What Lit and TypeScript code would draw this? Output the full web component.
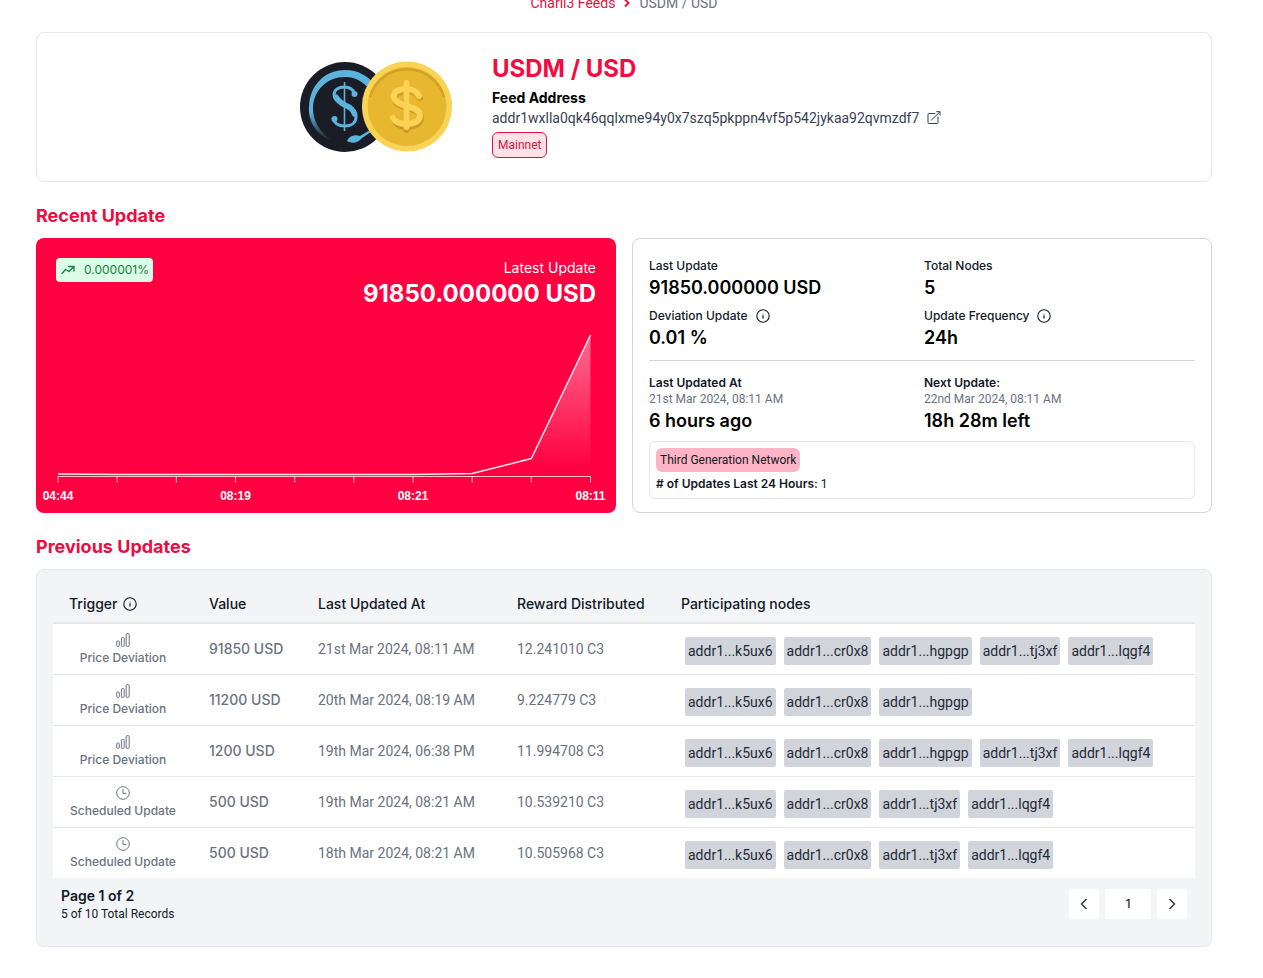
import { LitElement, html, css, svg } from "lit";
import { customElement, property, state } from "lit/decorators.js";

type Kind = "deviation" | "scheduled";

interface UpdateRow {
  kind: Kind;
  value: string;
  date: string;
  reward: string;
  nodes: string[];
}

const K = "addr1...k5ux6";
const C = "addr1...cr0x8";
const H = "addr1...hgpgp";
const T = "addr1...tj3xf";
const L = "addr1...lqgf4";

const ROWS: UpdateRow[] = [
  { kind: "deviation", value: "91850 USD", date: "21st Mar 2024, 08:11 AM", reward: "12.241010 C3", nodes: [K, C, H, T, L] },
  { kind: "deviation", value: "11200 USD", date: "20th Mar 2024, 08:19 AM", reward: "9.224779 C3", nodes: [K, C, H] },
  { kind: "deviation", value: "1200 USD", date: "19th Mar 2024, 06:38 PM", reward: "11.994708 C3", nodes: [K, C, H, T, L] },
  { kind: "scheduled", value: "500 USD", date: "19th Mar 2024, 08:21 AM", reward: "10.539210 C3", nodes: [K, C, T, L] },
  { kind: "scheduled", value: "500 USD", date: "18th Mar 2024, 08:21 AM", reward: "10.505968 C3", nodes: [K, C, T, L] },
];

const infoIcon = html`<svg width="14" height="14" viewBox="0 0 14 14" fill="none" stroke="currentColor" role="img" aria-label="Info">
  <circle cx="7" cy="7" r="6.2" stroke-width="1.1"></circle>
  <path d="M7 6.2v3.2" stroke-width="1.2"></path>
  <path d="M7 4.4v1" stroke-width="1.1" opacity="0.6"></path>
</svg>`;

const barsIcon = html`<svg width="14" height="14" viewBox="0 0 14 14" fill="none" stroke="currentColor" aria-hidden="true">
  <rect x="0.7" y="8" width="2.6" height="5.3" rx="0.8"></rect>
  <rect x="5.4" y="4.6" width="2.8" height="8.7" rx="0.8"></rect>
  <rect x="10.2" y="0.7" width="3" height="12.6" rx="0.8"></rect>
</svg>`;

const clockIcon = html`<svg width="14" height="14" viewBox="0 0 14 14" fill="none" stroke="currentColor" aria-hidden="true">
  <circle cx="7" cy="7" r="6.3"></circle>
  <path d="M7 3.4V7.4H10" stroke-linecap="round" stroke-linejoin="round"></path>
</svg>`;

@customElement("coin-pair")
class CoinPair extends LitElement {
  static styles = css`
    :host { display: block; flex: none; }
    .coins { display: block; }
  `;

  render() {
    return html`<svg class="coins" width="152" height="92" viewBox="0 0 152 92" role="img" aria-label="USDM and USD coins">
      <defs>
        <linearGradient id="ring" x1="0" y1="0" x2="0" y2="1">
          <stop offset="0.6" stop-color="#5cb3dd"></stop>
          <stop offset="1" stop-color="#5cb3dd" stop-opacity="0"></stop>
        </linearGradient>
      </defs>
      <circle cx="45" cy="46" r="45" fill="#1a1d26"></circle>
      <path fill="url(#ring)" d="M33 80C16 74 8 61 9 45C10 24 25 9 45 9C58 9 68 15 75 24L70 29C63 20 55 16 45 16C27 16 14 29 13 46C12.500 60 20 72 33 80Z"></path>
      <path fill="#5cb3dd" d="M47 80C49 75 55 73 60 75L70 69L71 71L62 77C58 82 52 83 47 80Z"></path>
      <g fill="none" stroke="#5cb3dd">
        <path stroke-width="1.600" d="M44.500 21V70"></path>
        <path stroke-width="3" d="M55 33C53 28 50 26 44.500 26C38 26 34 29 34 34C34 39 38 41.500 44.500 44C52 47 56 50 56 56C56 62 51 65 45 65C38 65 34 62 33 57"></path>
        <path stroke-width="5.500" stroke-linecap="round" d="M36 36C38 40 41 42 45 44C50 46 53 48 54.500 53"></path>
      </g>
      <circle cx="54.500" cy="33" r="3" fill="#5cb3dd"></circle>
      <circle cx="34.500" cy="58" r="3" fill="#5cb3dd"></circle>
      <circle cx="107" cy="45.500" r="45" fill="#fad254"></circle>
      <circle cx="107" cy="45.500" r="39.500" fill="#e8b730"></circle>
      <path fill="none" stroke="#d2a127" stroke-width="2.500" d="M70 36A38.500 38.500 0 0 1 144 36"></path>
      <g fill="none" stroke-width="6" stroke-linecap="round">
        <g stroke="#cc9a27">
          <path d="M106.500 25V69"></path>
          <path d="M120 37C117 31 112 30 107 30C99 30 94 33 95 38C96 44 101 45 107 47C115 49 121 51 121 57C121 63 114 66 107 66C100 66 95 63 94 58"></path>
        </g>
        <g stroke="#fad254">
          <path d="M106.500 22V66"></path>
          <path d="M119 35C116 29 112 28 106.500 28C98 28 93 31 94 36C95 41 100 43 106 45C114 47 120 49 120 54.500C120 60 114 63 106.500 63C99 63 95 61 93 57"></path>
        </g>
      </g>
    </svg>`;
  }
}

@customElement("price-chart")
class PriceChart extends LitElement {
  static styles = css`
    :host { display: block; }
    .chart { display: block; width: 100%; height: auto; }
    .tick { font-family: "Liberation Sans", Arial, sans-serif; font-size: 12px; font-weight: 700; fill: #fff; text-anchor: middle; }
  `;

  @property({ attribute: false }) labels = ["04:44", "08:19", "08:21", "08:11"];

  render() {
    const left = 22;
    const right = 554.5;
    const step = (right - left) / 9;
    const ys = [164, 164.5, 164.5, 164.5, 164.5, 164.5, 164.5, 163.5, 148.5, 25];
    const line = ys.map((y, i) => `${left + i * step},${y}`).join(" ");
    return html`<svg class="chart" viewBox="0 0 580 203" role="img" aria-label="Price history">
      <defs>
        <linearGradient id="fade" x1="0" y1="0" x2="0" y2="1">
          <stop offset="0" stop-color="#fff" stop-opacity="0.42"></stop>
          <stop offset="0.95" stop-color="#fff" stop-opacity="0"></stop>
        </linearGradient>
      </defs>
      <polygon fill="url(#fade)" points="${left},166 ${line} ${right},166"></polygon>
      <polyline fill="none" stroke="#fff" stroke-opacity="0.9" stroke-width="1.500" points="${line}"></polyline>
      <path fill="none" stroke="#fff" stroke-opacity="0.75" d="M${left} 166.500H${right}"></path>
      ${ys.map((_, i) => svg`<path stroke="#fff" stroke-opacity="0.75" d="M${left + i * step} 166.500v6"></path>`)}
      ${this.labels.map((t, i) => svg`<text class="tick" x=${left + i * step * 3} y="190">${t}</text>`)}
    </svg>`;
  }
}

@customElement("app-root")
class AppRoot extends LitElement {
  static styles = css`
    :host {
      display: block;
      box-sizing: border-box;
      background: #fff;
      color: #111827;
      font-family: Inter, "Liberation Sans", sans-serif;
      font-size: 14px;
      line-height: 20px;
    }
    * { box-sizing: border-box; }
    svg { display: block; flex: none; }
    h1, h2, p, dl, dd, dt { margin: 0; }
    .page { display: flow-root; padding: 0 51px 31px 36px; }
    .crumbs, .address, .net, .when, .pill, .gen, .date, .chip, .total { font-family: Roboto, "Liberation Sans", sans-serif; }
    .crumbs { display: flex; justify-content: center; align-items: center; gap: 8px; height: 24px; margin-top: -9px; color: #6b7280; }
    .crumbs a { color: #e11141; text-decoration: none; }
    .crumbs svg { color: #e11141; }
    .hero { display: flex; justify-content: center; align-items: center; gap: 40px; margin-top: 17px; padding: 23px; border: 1px solid #e5e7eb; border-radius: 8px; }
    .info { display: flex; flex-direction: column; align-items: flex-start; min-width: 456px; }
    .title { margin-bottom: 6px; font-size: 24px; line-height: 26px; font-weight: 700; color: #f50a41; }
    .strong { font-weight: 700; color: #000; }
    .address { display: flex; align-items: center; gap: 8px; color: #374151; text-decoration: none; }
    .net { margin-top: 4px; padding: 4px 5px; border: 1px solid #dc143c; border-radius: 6px; background: #fde3e8; color: #dc143c; font-size: 12px; line-height: 16px; }
    .heading { margin: 20px 0 8px; font-size: 18px; line-height: 28px; font-weight: 700; color: #ec0c40; }
    .panels { display: grid; grid-template-columns: 1fr 1fr; gap: 16px; }
    .latest { display: flex; flex-direction: column; border-radius: 8px; background: #ff0040; color: #fff; overflow: hidden; }
    .top { display: flex; justify-content: space-between; align-items: flex-start; padding: 20px 20px 0; }
    .change { display: flex; align-items: center; gap: 8px; padding: 4px; border-radius: 4px; background: #dcfce7; color: #15803d; font-size: 12px; line-height: 16px; }
    .now { text-align: right; }
    .price { font-size: 24px; line-height: 32px; font-weight: 700; }
    .stats { padding: 19px 16px 13px; border: 1px solid #d1d5db; border-radius: 8px; font-size: 12px; line-height: 16px; }
    .pairs { display: grid; grid-template-columns: 1fr 1fr; gap: 6px 4px; }
    .pairs + .pairs { margin: 8px 0 6px; padding-top: 14px; border-top: 1px solid #d1d5db; }
    .label { display: flex; align-items: center; gap: 8px; font-weight: 500; }
    .label.bold { font-weight: 600; }
    .when { color: #6b7280; }
    .num { font-size: 18px; line-height: 28px; font-weight: 600; color: #000; }
    .gen { display: flex; flex-direction: column; align-items: flex-start; gap: 4px; padding: 6px; border: 1px solid #e5e7eb; border-radius: 6px; }
    .pill { padding: 4px; border-radius: 6px; background: #fdb5c6; }
    .records { padding: 16px; border: 1px solid #e5e7eb; border-radius: 8px; background: #f3f4f6; }
    .table { width: 100%; border-collapse: separate; border-spacing: 0; table-layout: fixed; }
    .c1 { width: 140px; }
    .c2 { width: 109px; }
    .c3 { width: 199px; }
    .c4 { width: 164px; }
    .table th { height: 38px; padding: 0 16px; border-bottom: 2px solid #e5e7eb; text-align: left; font-weight: 500; white-space: nowrap; }
    .table td { height: 51px; padding: 0 16px; border-bottom: 1px solid #e5e7eb; background: #fff; color: #6b7280; white-space: nowrap; }
    .table tr:last-child td { height: 50px; border-bottom: 0; }
    .table .trig { padding: 0; }
    .table .amount { font-weight: 500; }
    .table .nodes { padding-top: 3px; }
    .kind { display: flex; flex-direction: column; align-items: center; gap: 3px; font-size: 12px; line-height: 16px; font-weight: 500; }
    .sort { display: flex; align-items: center; gap: 6px; }
    .chips { display: flex; gap: 8px; padding-left: 4px; }
    .chip { padding: 4px 3px; border-radius: 2px; background: #d1d5db; color: #1f2937; }
    .foot { display: flex; justify-content: space-between; align-items: center; padding: 8px; }
    .count { font-family: Inter, "Liberation Sans", sans-serif; font-weight: 600; }
    .total { font-size: 12px; line-height: 16px; }
    .pager { display: flex; gap: 6px; }
    .pager button { display: flex; align-items: center; justify-content: center; width: 30px; height: 30px; padding: 0; border: 0; border-radius: 2px; background: #fff; color: #1f2937; font: 500 12px/16px Inter, sans-serif; }
    .pager .current { width: 46px; }
  `;

  @state() private page = 1;

  private go(delta: number) {
    this.page = Math.min(2, Math.max(1, this.page + delta));
  }

  render() {
    return html`<main class="page">
      <nav class="crumbs" aria-label="Breadcrumb">
        <a href="#feeds">Charli3 Feeds</a>
        <svg width="8" height="10" viewBox="0 0 8 10" fill="none" stroke="currentColor" stroke-width="2" aria-hidden="true"><path d="M2 1.500L5.500 5L2 8.500"></path></svg>
        <span>USDM / USD</span>
      </nav>

      <section class="hero">
        <coin-pair></coin-pair>
        <div class="info">
          <h1 class="title">USDM / USD</h1>
          <p class="strong">Feed Address</p>
          <a class="address" href="#address">
            <span>addr1wxlla0qk46qqlxme94y0x7szq5pkppn4vf5p542jykaa92qvmzdf7</span>
            <svg width="14" height="14" viewBox="0 0 14 14" fill="none" stroke="currentColor" stroke-linecap="round" stroke-linejoin="round" aria-hidden="true">
              <path d="M8 2.500H2Q1 2.500 1 3.500V11.500Q1 12.500 2 12.500H10Q11 12.500 11 11.500V6"></path>
              <path d="M4.500 9L13 0.700M9.500 0.700H13V4.200"></path>
            </svg>
          </a>
          <span class="net">Mainnet</span>
        </div>
      </section>

      <h2 class="heading">Recent Update</h2>
      <div class="panels">
        <section class="latest">
          <div class="top">
            <span class="change">
              <svg width="16" height="16" viewBox="0 0 16 16" fill="none" stroke="currentColor" stroke-width="1.300" stroke-linejoin="round" stroke-linecap="round" aria-hidden="true">
                <path d="M2 11.500L5.500 7.500L9 9.500L14 4.500M8.500 4.500H14V9"></path>
              </svg>
              0.000001%
            </span>
            <div class="now">
              <p>Latest Update</p>
              <p class="price">91850.000000 USD</p>
            </div>
          </div>
          <price-chart></price-chart>
        </section>

        <section class="stats">
          <dl class="pairs">
            <div><dt class="label">Last Update</dt><dd class="num">91850.000000 USD</dd></div>
            <div><dt class="label">Total Nodes</dt><dd class="num">5</dd></div>
            <div><dt class="label">Deviation Update ${infoIcon}</dt><dd class="num">0.01 %</dd></div>
            <div><dt class="label">Update Frequency ${infoIcon}</dt><dd class="num">24h</dd></div>
          </dl>
          <dl class="pairs">
            <div><dt class="label bold">Last Updated At</dt><dd class="when">21st Mar 2024, 08:11 AM</dd><dd class="num">6 hours ago</dd></div>
            <div><dt class="label bold">Next Update:</dt><dd class="when">22nd Mar 2024, 08:11 AM</dd><dd class="num">18h 28m left</dd></div>
          </dl>
          <div class="gen">
            <span class="pill">Third Generation Network</span>
            <p><span class="count"># of Updates Last 24 Hours:</span> 1</p>
          </div>
        </section>
      </div>

      <h2 class="heading">Previous Updates</h2>
      <section class="records">
        <table class="table">
          <colgroup><col class="c1"><col class="c2"><col class="c3"><col class="c4"><col></colgroup>
          <thead>
            <tr>
              <th scope="col"><span class="sort">Trigger ${infoIcon}</span></th>
              <th scope="col">Value</th>
              <th scope="col">Last Updated At</th>
              <th scope="col">Reward Distributed</th>
              <th scope="col">Participating nodes</th>
            </tr>
          </thead>
          <tbody>
            ${ROWS.map((r) => html`<tr>
              <td class="trig"><div class="kind">
                ${r.kind === "deviation" ? barsIcon : clockIcon}
                <span>${r.kind === "deviation" ? "Price Deviation" : "Scheduled Update"}</span>
              </div></td>
              <td class="amount">${r.value}</td>
              <td class="date">${r.date}</td>
              <td class="date">${r.reward}</td>
              <td class="nodes"><div class="chips">${r.nodes.map((n) => html`<span class="chip">${n}</span>`)}</div></td>
            </tr>`)}
          </tbody>
        </table>
        <div class="foot">
          <div>
            <p class="count">Page ${this.page} of 2</p>
            <p class="total">5 of 10 Total Records</p>
          </div>
          <div class="pager">
            <button aria-label="Previous page" @click=${() => this.go(-1)}>
              <svg width="8" height="12" viewBox="0 0 8 12" fill="none" stroke="currentColor" stroke-width="1.300"><path d="M6.500 1L1.500 6L6.500 11"></path></svg>
            </button>
            <button class="current" aria-current="page">${this.page}</button>
            <button aria-label="Next page" @click=${() => this.go(1)}>
              <svg width="8" height="12" viewBox="0 0 8 12" fill="none" stroke="currentColor" stroke-width="1.300"><path d="M1.500 1L6.500 6L1.500 11"></path></svg>
            </button>
          </div>
        </div>
      </section>
    </main>`;
  }
}
